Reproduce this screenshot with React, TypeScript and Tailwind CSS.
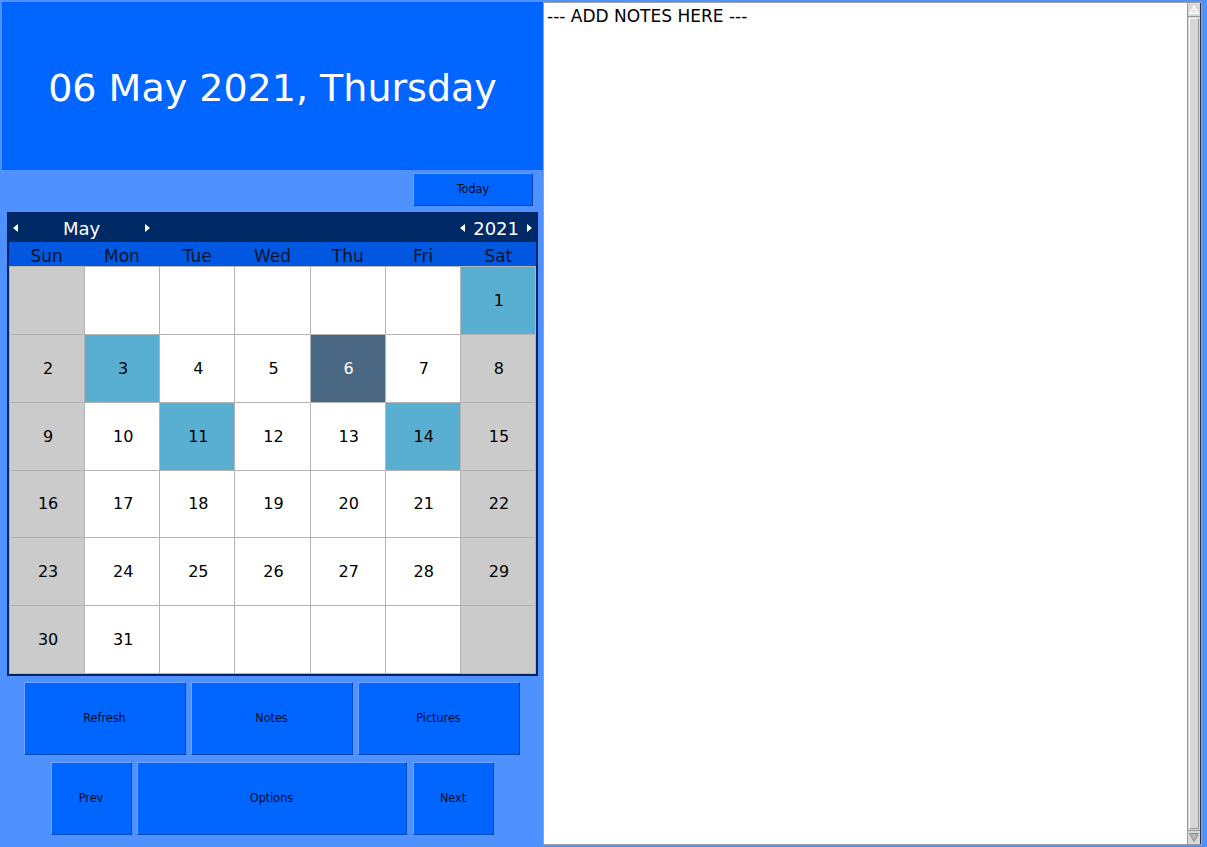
import React from "react";

const weeks: (number | null)[][] = [
  [null, null, null, null, null, null, 1],
  [2, 3, 4, 5, 6, 7, 8],
  [9, 10, 11, 12, 13, 14, 15],
  [16, 17, 18, 19, 20, 21, 22],
  [23, 24, 25, 26, 27, 28, 29],
  [30, 31, null, null, null, null, null],
];

const dayNames = ["Sun", "Mon", "Tue", "Wed", "Thu", "Fri", "Sat"];
const marked = [1, 3, 11, 14];
const selected = 6;

function Arrow({ dir }: { dir: "left" | "right" }) {
  return (
    <svg width="5" height="8" viewBox="0 0 5 8" className="shrink-0">
      {dir === "left" ? (
        <polygon points="5,0 5,8 0,4" fill="#ffffff" />
      ) : (
        <polygon points="0,0 0,8 5,4" fill="#ffffff" />
      )}
    </svg>
  );
}

function Btn({ label, className }: { label: string; className: string }) {
  return (
    <button
      className={
        "flex items-center justify-center bg-[#0066ff] border border-t-[#6ea3ff] border-l-[#6ea3ff] border-b-[#0047b3] border-r-[#0047b3] text-[12.5px] text-[#000a22] " +
        className
      }
      style={{ fontFamily: '"DejaVu Sans Condensed", "DejaVu Sans", sans-serif' }}
    >
      {label}
    </button>
  );
}

function cellClass(day: number | null, col: number) {
  if (day === selected) return "bg-[#4a6884] text-white";
  if (day !== null && marked.includes(day)) return "bg-[#59afd1] text-black";
  if (col === 0 || col === 6) return "bg-[#cbcbcb] text-black";
  return "bg-white text-black";
}

export default function App() {
  return (
    <div
      className="w-[1207px] h-[847px] bg-[#4f91fe] flex pt-[2px] pl-[2px] pb-[2px] pr-[5px]"
      style={{ fontFamily: '"DejaVu Sans", Verdana, sans-serif' }}
    >
      {/* Left side */}
      <div className="w-[541px] flex flex-col shrink-0">
        <div className="h-[168px] bg-[#0066ff] flex items-center justify-center text-white text-[38px] pt-[5px]">
          06 May 2021, Thursday
        </div>

        <div className="flex justify-end pr-[10px] mt-[3px]">
          <Btn label="Today" className="w-[120px] h-[33px]" />
        </div>

        {/* Calendar */}
        <div className="mx-[5px] mt-[6px] h-[464px] border-2 border-[#002466] flex flex-col">
          <div className="h-[28px] bg-[#002a66] flex items-center text-white text-[18px]">
            <div className="w-[145px] flex items-center justify-between px-[4px]">
              <Arrow dir="left" />
              <span>May</span>
              <Arrow dir="right" />
            </div>
            <div className="flex-1" />
            <div className="flex items-center gap-[8px] pr-[4px]">
              <Arrow dir="left" />
              <span>2021</span>
              <Arrow dir="right" />
            </div>
          </div>
          <div className="h-[24px] bg-[#0058e0] grid grid-cols-7 text-[17px] text-[#08142c] pt-[2px]">
            {dayNames.map((d) => (
              <div key={d} className="flex items-center justify-center">
                {d}
              </div>
            ))}
          </div>
          <div className="flex-1 grid grid-cols-7 grid-rows-6 gap-px p-px bg-[#b4b4b4] text-[16px]">
            {weeks.map((week, r) =>
              week.map((day, c) => (
                <div
                  key={r + "-" + c}
                  className={"flex items-center justify-center pt-px pl-[2px] " + cellClass(day, c)}
                >
                  {day ?? ""}
                </div>
              ))
            )}
          </div>
        </div>

        {/* Buttons */}
        <div className="flex justify-center gap-[5px] mt-[6px] pr-[2px]">
          <Btn label="Refresh" className="w-[162px] h-[73px]" />
          <Btn label="Notes" className="w-[162px] h-[73px]" />
          <Btn label="Pictures" className="w-[162px] h-[73px]" />
        </div>
        <div className="flex justify-center mt-[7px] pr-[1px]">
          <Btn label="Prev" className="w-[81px] h-[73px]" />
          <Btn label="Options" className="w-[270px] h-[73px] ml-[5px]" />
          <Btn label="Next" className="w-[81px] h-[73px] ml-[6px]" />
        </div>
      </div>

      {/* Notes */}
      <div className="flex-1 flex border border-[#a0a0a0] bg-white">
        <div className="flex-1 px-[3px] pt-[3px] text-[17px] leading-[20px] text-black">
          --- ADD NOTES HERE ---
        </div>
        <div className="w-[14px] flex flex-col bg-[#d4d4d4] border-l border-[#9a9a9a] border-r border-r-[#303030]">
          <div className="h-[14px] flex items-center justify-center border-b border-[#9a9a9a] bg-[#d8d8d8]">
            <svg width="10" height="9" viewBox="0 0 10 9">
              <polygon points="5,0.5 9.5,8.5 0.5,8.5" fill="#e8e8e8" stroke="#ffffff" />
            </svg>
          </div>
          <div className="flex-1 mx-[1px] my-[1px] bg-[#d6d6d6] border border-t-white border-l-white border-b-[#9a9a9a] border-r-[#9a9a9a]" />
          <div className="h-[14px] flex items-center justify-center border-t border-[#9a9a9a] bg-[#d8d8d8]">
            <svg width="10" height="9" viewBox="0 0 10 9">
              <polygon points="0.5,0.5 9.5,0.5 5,8.5" fill="#b8b8b8" stroke="#8c8c8c" />
            </svg>
          </div>
        </div>
      </div>
    </div>
  );
}
